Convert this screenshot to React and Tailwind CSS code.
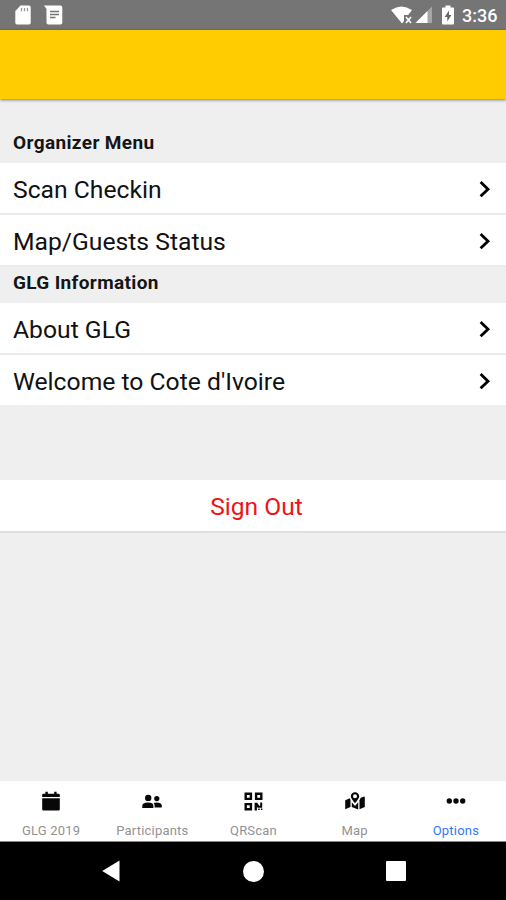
import React from "react";

function Chevron() {
  return (
    <svg className="mr-[15px] h-[18px] w-[12px]" viewBox="0 0 12 18" fill="none" stroke="#000" strokeWidth="2.8">
      <path d="M1.6 2.1 L9 9.2 L1.6 16.3" />
    </svg>
  );
}

function Row({ label, last }) {
  return (
    <div className={`flex items-center justify-between bg-white pl-[13px] ${last ? "h-[50px]" : "h-[52px] border-b-2 border-[#ebebeb]"}`}>
      <span className="pt-[3px] text-[24.7px] leading-8 whitespace-nowrap text-[#111]">{label}</span>
      <span className="pt-px">
        <Chevron />
      </span>
    </div>
  );
}

function CalendarIcon() {
  return (
    <svg width="18" height="20" viewBox="0 0 18 20" fill="#080808">
      <path d="M3.4 .8h2.4v2h6.4v-2h2.4v2h2a1.2 1.2 0 0 1 1.2 1.2v2.1H.2V4a1.2 1.2 0 0 1 1.2-1.2h2z" />
      <path d="M.2 7.3h17.6v10.9a1.2 1.2 0 0 1-1.2 1.2H1.4a1.2 1.2 0 0 1-1.2-1.2z" />
    </svg>
  );
}

function PeopleIcon() {
  return (
    <svg width="20" height="15" viewBox="0 0 20 15" fill="#080808">
      <circle cx="6.2" cy="3.9" r="3.2" />
      <circle cx="14.8" cy="4.6" r="2.6" />
      <path d="M.3 14v-2.3C.3 9.5 3 8.4 6.2 8.4s5.2 1.1 5.2 3.3V14z" />
      <path d="M12.6 13.4v-1.8c0-1.1-.5-1.9-1.2-2.5 1-.4 2.1-.6 3.4-.6 2.7 0 5 .9 5 3v1.9z" />
    </svg>
  );
}

function QrIcon() {
  return (
    <svg width="19" height="19" viewBox="0 0 19 19" fill="none" stroke="#080808" strokeWidth="2.4">
      <path d="M1.7 1.7h5.2v5.2H1.7zM12.1 1.7h5.2v5.2h-5.2zM1.7 12.1h5.2v5.2H1.7z" />
      <path d="M10.6 10.7h2.6l2 3.1h1v-3.3h2v5.3h-4.6l-.7-1v3.7h-2.3z" fill="#080808" stroke="none" />
      <path d="M14.2 16.6h1.5v1.5h-1.5zM16.9 16.6h1.5v1.5h-1.5z" fill="#080808" stroke="none" />
    </svg>
  );
}

function MapIcon() {
  return (
    <svg width="20" height="18" viewBox="0 0 20 18" fill="#080808">
      <path fillRule="evenodd" d="M10 .2c2.4 0 4.2 1.8 4.2 4.1 0 2-2.2 4.6-4.2 6.9-2-2.3-4.2-4.9-4.2-6.9C5.800 2 7.600.2 10 .2zm0 2.1a2 2 0 1 0 0 4 2 2 0 0 0 0-4z" />
      <path d="M4.9 6.200L.8 7.900c-.4.200-.6.500-.6.900v8.400l5.300-2.200V8.200z" />
      <path d="M6.800 10.200l3.200 3.700 3.200-3.700v7.300l-6.400-2.400z" />
      <path d="M14.500 8.300l1.200-2.500 3.400-1.300c.4-.1.700.1.700.5v10.100l-5.300 2.200z" />
    </svg>
  );
}

function Dots() {
  return (
    <svg width="20" height="8" viewBox="0 0 20 8" fill="#080808">
      <circle cx="3.3" cy="4" r="2.7" />
      <circle cx="10" cy="4" r="2.7" />
      <circle cx="16.7" cy="4" r="2.7" />
    </svg>
  );
}

const tabs = [
  { label: "GLG 2019", icon: <CalendarIcon /> },
  { label: "Participants", icon: <PeopleIcon /> },
  { label: "QRScan", icon: <QrIcon /> },
  { label: "Map", icon: <MapIcon /> },
  { label: "Options", icon: <Dots />, active: true },
];

function StatusBar() {
  return (
    <div className="flex h-[30px] items-center bg-[#757575] pl-[15px] text-white">
      <svg width="16" height="20" viewBox="0 0 16 20" fill="#fff">
        <path d="M5.5 0.5H14a1.7 1.7 0 0 1 1.7 1.7v15.6a1.7 1.7 0 0 1-1.7 1.7H2A1.7 1.7 0 0 1 .3 17.8V6z" />
        <path d="M6.5 3v3.3M9.5 3v3.3M12.5 3v3.3" stroke="#999" strokeWidth="1.3" />
      </svg>
      <svg className="ml-[13px]" width="19" height="20" viewBox="0 0 19 20" fill="#fff">
        <path d="M0 .5h16.5a1.8 1.8 0 0 1 1.8 1.8v15.4a1.8 1.8 0 0 1-1.8 1.8H4.3a1.8 1.8 0 0 1-1.8-1.8V4z" />
        <path d="M6 6.500h9M6 9.500h9M6 12.500h5.500" stroke="#757575" strokeWidth="1.5" />
      </svg>
      <svg className="ml-[328px]" width="23" height="20" viewBox="0 0 23 20" fill="#fff">
        <path d="M0 5Q10.5-2 21 5L17.2 10H13v6l-2 2.6z" />
        <path d="M15 12l5 6M20 12l-5 6" stroke="#fff" strokeWidth="1.6" />
      </svg>
      <svg className="ml-px" width="18" height="18" viewBox="0 0 18 18">
        <path d="M17 0.5V17H.5z" fill="#a6a6a6" />
        <path d="M12.5 5V17H.5z" fill="#fff" />
      </svg>
      <svg className="ml-[9px]" width="12" height="20" viewBox="0 0 12 20">
        <path d="M3.5.5h5v2H11a1 1 0 0 1 1 1v15a1 1 0 0 1-1 1H1a1 1 0 0 1-1-1v-15a1 1 0 0 1 1-1h2.500z" fill="#fff" />
        <path d="M7 5.5L2.7 12h2.6v4.5L9.4 10H7z" fill="#666" />
      </svg>
      <span className="ml-[8px] text-[18px] font-medium">3:36</span>
    </div>
  );
}

export default function App() {
  return (
    <div className="flex h-[900px] w-[506px] flex-col overflow-hidden bg-[#efefef] font-['Roboto',sans-serif]">
      <StatusBar />
      <div className="z-10 h-[69px] bg-[#ffcc02] shadow-[0_1px_3px_rgba(0,0,0,0.5)]" />
      <div className="h-[64px] pt-[32px] pl-[13px]">
        <h2 className="text-[19px] leading-6 font-bold tracking-[0.38px] text-[#151515]">Organizer Menu</h2>
      </div>
      <Row label="Scan Checkin" />
      <Row label="Map/Guests Status" />
      <div className="h-[36px] pt-[4px] pl-[13px]">
        <h2 className="text-[19px] leading-6 font-bold tracking-[0.35px] text-[#151515]">GLG Information</h2>
      </div>
      <Row label="About GLG" />
      <Row label="Welcome to Cote d'Ivoire" last />
      <div className="mt-[75px] flex h-[53px] items-center justify-center border-b-2 border-[#dedede] bg-white pt-[4px] pl-[7px] text-[24.6px] text-[#ee1418]">
        Sign Out
      </div>
      <div className="flex-1" />
      <nav className="grid h-[61px] grid-cols-5 border-b border-[#888] bg-white">
        {tabs.map((t) => (
          <div key={t.label} className="flex flex-col items-center text-[#080808]">
            <div className="flex h-[41px] items-center justify-center pb-px pl-px">{t.icon}</div>
            <span className={`pl-px text-[13px] leading-[18px] tracking-[0.2px] ${t.active ? "text-[#3478f6]" : "text-[#929292]"}`}>{t.label}</span>
          </div>
        ))}
      </nav>
      <div className="flex h-[58px] items-center bg-black pl-[102px]">
        <svg width="18" height="22" viewBox="0 0 18 22" fill="#fff"><path d="M17.5 .5v21L.2 11z" /></svg>
        <div className="ml-[123px] size-[21px] rounded-full bg-white" />
        <div className="ml-[122px] size-[20px] rounded-[1px] bg-white" />
      </div>
    </div>
  );
}
